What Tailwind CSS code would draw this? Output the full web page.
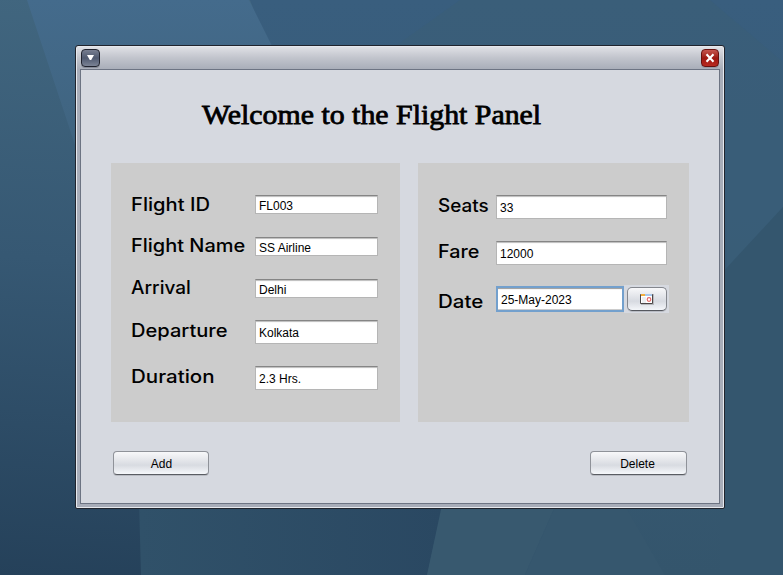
<!DOCTYPE html>
<html lang="en">
<head>
<meta charset="utf-8">
<title>Flight Panel</title>
<script src="https://cdn.jsdelivr.net/npm/@tailwindcss/browser@4"></script>
</head>
<body class="relative h-[575px] w-[783px] overflow-hidden bg-[#34566f] font-['Liberation_Sans',Arial,sans-serif] text-xs text-black">
<svg class="absolute inset-0" width="783" height="575" viewBox="0 0 783 575">
  <defs>
    <linearGradient id="base" x1="0.1" y1="0" x2="0" y2="1"><stop offset="0" stop-color="#41667f"/><stop offset=".45" stop-color="#365873"/><stop offset="1" stop-color="#25415a"/></linearGradient>
    <linearGradient id="right" x1="0" y1="0" x2="0" y2="1"><stop offset="0" stop-color="#395e7e"/><stop offset=".5" stop-color="#375b76"/><stop offset="1" stop-color="#34556c"/></linearGradient>
    <linearGradient id="band" x1="0" y1="0" x2="0" y2="1"><stop offset="0" stop-color="#446b8c"/><stop offset="1" stop-color="#3f637e"/></linearGradient>
    <linearGradient id="low" x1="1" y1="0" x2="0" y2="0"><stop offset="0" stop-color="#2a4862"/><stop offset="1" stop-color="#305169"/></linearGradient>
  </defs>
  <rect width="783" height="575" fill="url(#base)"/>
  <path d="M250 0H783V575H427L440 508V45H267Z" fill="url(#right)"/>
  <path d="M27 0H249L272 46H120V160H80Z" fill="url(#band)"/>
  <path d="M390 50 460 0H710L783 62V207L727 270V50Z" fill="#3a5e78" opacity=".7"/>
  <path d="M783 207V575H720V275Z" fill="#34566e"/>
  <path d="M139 500H444L427 575H141Z" fill="url(#low)"/>
  <path d="M443 500H558L525 575H427Z" fill="#38596f"/>
  <path d="M558 500H622L665 575H525Z" fill="#36576e"/>
</svg>

<main class="relative ml-[75px] mt-[45px] flex h-[464px] w-[650px] flex-col rounded-t-[3px] rounded-b-[2px] border border-[#20242d] bg-[#a8adb9] shadow-[inset_0_0_0_1px_#e6e8ed]">
  <header class="mx-px mt-px flex h-[22px] items-start justify-between bg-linear-to-b from-[#dfe0e5] via-[#c1c4cc] to-[#a9aeb9] px-1 pt-0.5">
    <button class="h-[18px] w-[19px] rounded-[4px] border border-[#20232e] bg-linear-to-b from-[#777e90] via-[#505a70] to-[#7b8395] shadow-[0_1px_0_#858b98]">
      <svg width="17" height="16" viewBox="0 0 17 16"><path d="M5 5H12L9.2 10H7.8Z" fill="#fff"/></svg>
    </button>
    <button class="h-[18px] w-[18px] rounded-[4px] border border-[#67110f] bg-linear-to-b from-[#c5544d] via-[#9d1711] to-[#b9291f] shadow-[0_1px_0_#989ba5]">
      <svg width="16" height="16" viewBox="0 0 16 16"><path d="M4.5 4.2 11.5 11.8M11.5 4.2 4.5 11.8" stroke="#fff" stroke-width="2.1"/></svg>
    </button>
  </header>

  <section class="mx-1 flex h-[435px] flex-col border border-[#6d7483] bg-[#d6d9e0]">
    <h1 class="ml-[121px] mt-[27px] h-[36px] w-[400px] origin-left scale-x-[1.066] whitespace-nowrap font-['Liberation_Serif',serif] text-[28px] leading-[36px] [-webkit-text-stroke:0.8px_black]">Welcome to the Flight Panel</h1>

    <div class="ml-[30px] mt-[30px] flex gap-[18px]">
      <div class="h-[259px] w-[289px] bg-[#cccccc] pl-5 pt-8">
        <div class="flex h-[42px]"><label class="w-[124px] whitespace-nowrap pt-px font-[Inter] text-[18px] font-medium leading-[18px]"><span class="inline-block origin-left scale-x-[1.12]">Flight ID</span></label><div class="h-[19px] w-[123px] border border-[#b5b5b5] border-t-[#858585] bg-white pl-[3px] leading-[21px] shadow-[inset_0_2px_1px_-1px_#bcbcbc]">FL003</div></div>
        <div class="flex h-[42px]"><label class="w-[124px] whitespace-nowrap font-[Inter] text-[18px] font-medium leading-[18px]"><span class="inline-block origin-left scale-x-[1.11]">Flight Name</span></label><div class="h-[19px] w-[123px] border border-[#b5b5b5] border-t-[#858585] bg-white pl-[3px] leading-[21px] shadow-[inset_0_2px_1px_-1px_#bcbcbc]">SS Airline</div></div>
        <div class="flex h-[41px]"><label class="w-[124px] whitespace-nowrap font-[Inter] text-[18px] font-medium leading-[18px]"><span class="inline-block origin-left scale-x-[1.055]">Arrival</span></label><div class="h-[19px] w-[123px] border border-[#b5b5b5] border-t-[#858585] bg-white pl-[3px] leading-[21px] shadow-[inset_0_2px_1px_-1px_#bcbcbc]">Delhi</div></div>
        <div class="flex h-[46px]"><label class="w-[124px] whitespace-nowrap pt-0.5 font-[Inter] text-[18px] font-medium leading-[18px]"><span class="inline-block origin-left scale-x-[1.115]">Departure</span></label><div class="h-[24px] w-[123px] border border-[#b5b5b5] border-t-[#858585] bg-white pl-[3px] leading-[25px] shadow-[inset_0_2px_1px_-1px_#bcbcbc]">Kolkata</div></div>
        <div class="flex"><label class="w-[124px] whitespace-nowrap pt-0.5 font-[Inter] text-[18px] font-medium leading-[18px]"><span class="inline-block origin-left scale-x-[1.14]">Duration</span></label><div class="h-[24px] w-[123px] border border-[#b5b5b5] border-t-[#858585] bg-white pl-[3px] leading-[25px] shadow-[inset_0_2px_1px_-1px_#bcbcbc]">2.3 Hrs.</div></div>
      </div>

      <div class="h-[259px] w-[271px] bg-[#cccccc] pl-5 pt-8">
        <div class="flex h-[46px]"><label class="w-[58px] whitespace-nowrap pt-0.5 font-[Inter] text-[18px] font-medium leading-[18px]"><span class="inline-block origin-left scale-x-[1.05]">Seats</span></label><div class="h-[24px] w-[171px] border border-[#b5b5b5] border-t-[#858585] bg-white pl-[3px] leading-[25px] shadow-[inset_0_2px_1px_-1px_#bcbcbc]">33</div></div>
        <div class="flex h-[44px]"><label class="w-[58px] whitespace-nowrap pt-0.5 font-[Inter] text-[18px] font-medium leading-[18px]"><span class="inline-block origin-left scale-x-[1.1]">Fare</span></label><div class="h-[24px] w-[171px] border border-[#b5b5b5] border-t-[#858585] bg-white pl-[3px] leading-[25px] shadow-[inset_0_2px_1px_-1px_#bcbcbc]">12000</div></div>
        <div class="flex"><label class="w-[58px] whitespace-nowrap pt-[8px] font-[Inter] text-[18px] font-medium leading-[18px]"><span class="inline-block origin-left scale-x-[1.14]">Date</span></label>
          <div class="mt-px h-[26px] w-[128px] border-2 border-[#73a0cd] bg-white pl-[3px] leading-[24px] shadow-[inset_0_2px_1px_-1px_#999,inset_0_-1px_0_#ccc]">25-May-2023</div>
          <div class="h-[28px] w-[45px] bg-[#d6d9e0] pl-[3px] pt-0.5">
            <button class="flex h-6 w-10 items-center justify-center rounded-[5px] border border-[#84878e] border-b-[#55585f] bg-linear-to-b from-[#f8f8fa] via-[#d7dae1] via-60% to-[#f4f6fa] shadow-[0_1px_0_#b9bcc3]">
              <svg width="14" height="12" viewBox="0 0 14 12"><path d="M1 1H14V12H1Z" fill="#b7b9be"/><path d="M.5 1.5H12.5V10.5H.5Z" fill="#fff" stroke="#4a4547"/><path d="M1 1H5V3H1Z" fill="#f4ae3d"/><path d="M5 1H12V3H5Z" fill="#a9c8ec"/><path d="M2 5H6M2 7H6M2 9H6" stroke="#dce0e7"/><circle cx="9" cy="6.5" r="1.8" fill="none" stroke="#e66868" stroke-width="1.2"/></svg>
            </button>
          </div>
        </div>
      </div>
    </div>

    <div class="ml-8 mr-8 mt-[29px] flex justify-between">
      <button class="h-6 w-24 rounded-[4px] border border-[#8f9299] border-b-[#5a5d63] bg-linear-to-b from-[#f8f8fa] via-[#d8dbe1] via-60% to-[#f6f8fb] pl-px pt-px leading-[22px] shadow-[0_1px_0_#b9bcc3]">Add</button>
      <button class="h-6 w-[97px] rounded-[4px] border border-[#8f9299] border-b-[#5a5d63] bg-linear-to-b from-[#f8f8fa] via-[#d8dbe1] via-60% to-[#f6f8fb] pr-[2px] pt-px leading-[22px] shadow-[0_1px_0_#b9bcc3]">Delete</button>
    </div>
  </section>
</main>
</body>
</html>
